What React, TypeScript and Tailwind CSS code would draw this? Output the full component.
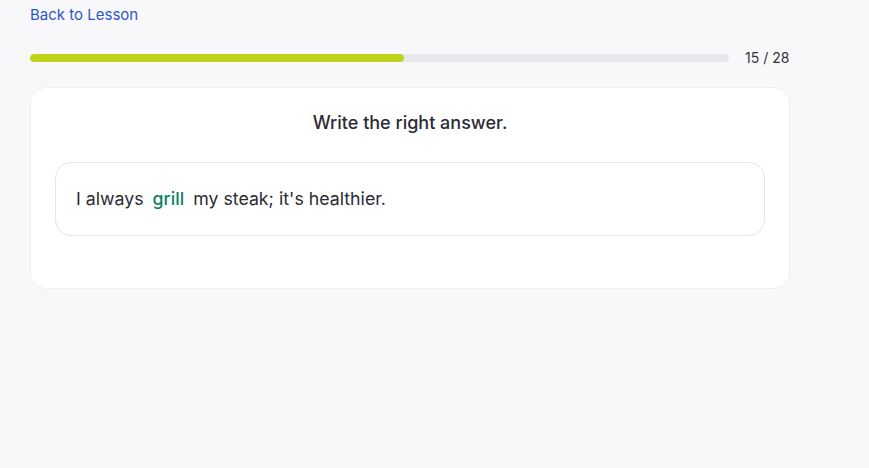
import React from "react";

function App() {
  const done = 15;
  const total = 28;
  const pct = (done / total) * 100;

  return (
    <div className="min-h-screen bg-[#f8f8fa] px-[30px] pt-[2px] font-['Inter',sans-serif] text-[#2b2b36]">
      <div className="w-[760px]">
        <a href="#" className="text-[15px] leading-[18px] text-[#2d56c8]">
          Back to Lesson
        </a>
        <div className="mt-[21px] flex items-center gap-4">
          <div className="h-2 flex-1 overflow-hidden rounded-full bg-[#e8e8ec]">
            <div className="h-full rounded-full bg-[#bfd31a]" style={{ width: `${pct}%` }} />
          </div>
          <span className="w-[45px] text-[14px] text-[#33333d]">
            {done} / {total}
          </span>
        </div>
        <div className="mt-[19px] rounded-2xl border border-[#f0f0f3] bg-white px-6 pt-[23px] pb-[52px]">
          <h2 className="text-center text-[18px] font-medium leading-6">Write the right answer.</h2>
          <div className="mt-[27px] flex h-[74px] items-center rounded-2xl border border-[#e6e6ea] px-5 text-[17.75px]">
            <span>I always</span>
            <span className="mx-[9px] font-medium text-[#0e8068]">grill</span>
            <span>my steak; it's healthier.</span>
          </div>
        </div>
      </div>
    </div>
  );
}

export default App;
